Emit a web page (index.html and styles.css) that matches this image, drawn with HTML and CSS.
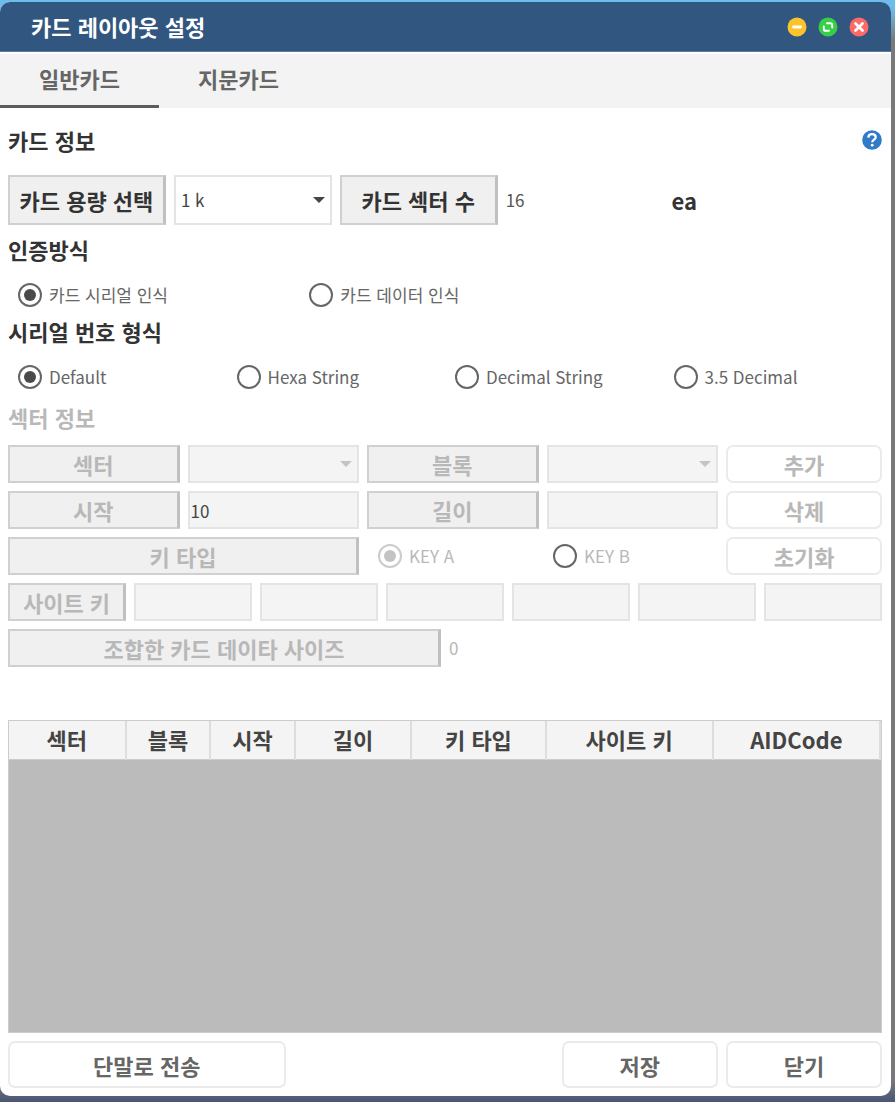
FILE: index.html
```html
<!DOCTYPE html>
<html lang="ko">
<head>
<meta charset="utf-8">
<meta name="viewport" content="width=device-width, initial-scale=1">
<title>카드 레이아웃 설정</title>
<link rel="stylesheet" href="styles.css">
</head>
<body>
<div class="window">
  <header class="titlebar">
    <h1 class="title">카드 레이아웃 설정</h1>
    <div class="controls">
      <button class="control" type="button" aria-label="최소화">
        <svg viewBox="0 0 20 20"><circle cx="10" cy="10" r="9.5" fill="#fcc42c"/><path d="M6.5 10h7" stroke="#fff" stroke-width="2.8" stroke-linecap="round"/></svg>
      </button>
      <button class="control" type="button" aria-label="최대화">
        <svg viewBox="0 0 20 20"><circle cx="10" cy="10" r="9.5" fill="#36d048"/><path d="M9 6.200h3.300a1.900 1.900 0 0 1 1.900 1.900v2.400M11 13.800H7.700a1.900 1.900 0 0 1-1.900-1.900V9.500" fill="none" stroke="#fff" stroke-width="1.900" stroke-linecap="round"/></svg>
      </button>
      <button class="control" type="button" aria-label="창 닫기">
        <svg viewBox="0 0 20 20"><circle cx="10" cy="10" r="9.5" fill="#fb6a67"/><path d="M6.500 6.500l7 7m0-7l-7 7" stroke="#fff" stroke-width="2.700" stroke-linecap="round"/></svg>
      </button>
    </div>
  </header>

  <nav class="tabs" role="tablist">
    <button class="tab tab-active" type="button" role="tab" aria-selected="true">일반카드</button>
    <button class="tab" type="button" role="tab" aria-selected="false">지문카드</button>
  </nav>

  <main class="content">
    <div class="info-heading">
      <h2 class="heading">카드 정보</h2>
      <button class="help" type="button" aria-label="도움말">
        <svg viewBox="0 0 20 20"><circle cx="10" cy="10" r="9.800" fill="#2f7bc8"/><path d="M6.300 7.600C6.400 5.300 7.800 4.200 10 4.200s3.700 1.200 3.700 3.100c0 2.300-3.500 2.500-3.500 4.900" fill="none" stroke="#fff" stroke-width="2.200"/><circle cx="10.200" cy="15.200" r="1.400" fill="#fff"/></svg>
      </button>
    </div>
    <div class="info-row">
      <label class="caption" for="capacity">카드 용량 선택</label>
      <div class="select">
        <select class="field field-open" id="capacity"><option>1 k</option></select>
      </div>
      <label class="caption" for="sectors">카드 섹터 수</label>
      <output class="value" id="sectors">16</output>
      <span class="unit">ea</span>
    </div>

    <h2 class="heading heading-group">인증방식</h2>
    <div class="radios radios-three">
      <label class="radio"><input type="radio" name="auth" checked>카드 시리얼 인식</label>
      <label class="radio"><input type="radio" name="auth">카드 데이터 인식</label>
    </div>

    <h2 class="heading heading-group">시리얼 번호 형식</h2>
    <div class="radios radios-four">
      <label class="radio"><input type="radio" name="format" checked>Default</label>
      <label class="radio"><input type="radio" name="format">Hexa String</label>
      <label class="radio"><input type="radio" name="format">Decimal String</label>
      <label class="radio"><input type="radio" name="format">3.5 Decimal</label>
    </div>

    <h2 class="heading heading-off">섹터 정보</h2>
    <div class="sector">
      <div class="sector-grid">
        <label class="caption caption-off" for="sector">섹터</label>
        <div class="select select-off"><select class="field" id="sector" disabled></select></div>
        <label class="caption caption-off" for="block">블록</label>
        <div class="select select-off"><select class="field" id="block" disabled></select></div>
        <button class="button" type="button" disabled>추가</button>

        <label class="caption caption-off" for="start">시작</label>
        <input class="field" id="start" type="text" value="10" disabled>
        <label class="caption caption-off" for="length">길이</label>
        <input class="field" id="length" type="text" disabled>
        <button class="button" type="button" disabled>삭제</button>

        <span class="caption caption-off span-two" id="keytype">키 타입</span>
        <div class="keys span-two" role="radiogroup" aria-labelledby="keytype">
          <label class="radio radio-off"><input type="radio" name="key" checked disabled>KEY A</label>
          <label class="radio radio-off"><input type="radio" name="key">KEY B</label>
        </div>
        <button class="button" type="button" disabled>초기화</button>
      </div>

      <div class="site-grid">
        <label class="caption caption-off" for="site1">사이트 키</label>
        <input class="field" id="site1" type="text" disabled>
        <input class="field" type="text" aria-label="사이트 키 2" disabled>
        <input class="field" type="text" aria-label="사이트 키 3" disabled>
        <input class="field" type="text" aria-label="사이트 키 4" disabled>
        <input class="field" type="text" aria-label="사이트 키 5" disabled>
        <input class="field" type="text" aria-label="사이트 키 6" disabled>
      </div>

      <div class="size-grid">
        <label class="caption caption-off" for="size">조합한 카드 데이타 사이즈</label>
        <output class="value value-off" id="size">0</output>
      </div>
    </div>

    <div class="list">
      <table class="table">
        <thead>
          <tr>
            <th class="col-index">섹터</th>
            <th class="col-short">블록</th>
            <th class="col-short">시작</th>
            <th class="col-index">길이</th>
            <th class="col-type">키 타입</th>
            <th class="col-wide">사이트 키</th>
            <th class="col-wide">AIDCode</th>
          </tr>
        </thead>
      </table>
    </div>

    <footer class="actions">
      <button class="button" type="button">단말로 전송</button>
      <button class="button button-save" type="button">저장</button>
      <button class="button" type="button">닫기</button>
    </footer>
  </main>
</div>
</body>
</html>
```

FILE: styles.css
```css
* {
  box-sizing: border-box;
}

body {
  margin: 0;
  min-height: 100vh;
  padding: 2px 4px 6px 0;
  display: flex;
  background: linear-gradient(#6cbcec, #6cbcec 8px, #77797b 40px, #77797b 98%, #4a5678);
  color: #333;
  font-family: "Noto Sans CJK KR", "Noto Sans", sans-serif;
  font-size: 17px;
  line-height: 24px;
}

button,
input,
select {
  margin: 0;
  font: inherit;
  color: inherit;
}

svg {
  display: block;
  width: 100%;
  height: 100%;
}

.window {
  flex: 1;
  min-width: 0;
  display: flex;
  flex-direction: column;
  background: #fff;
  border-radius: 10px;
  overflow: hidden;
}

.titlebar {
  display: flex;
  align-items: center;
  justify-content: space-between;
  height: 50px;
  padding: 0 22px 0 31px;
  background: #31567f;
  border-bottom: 1px solid #5d7a9e;
}

.title {
  margin: 0;
  padding-bottom: 2px;
  color: #fff;
  font-size: 22px;
  line-height: 32px;
}

.controls {
  display: flex;
  gap: 11px;
}

.control,
.help {
  width: 20px;
  height: 20px;
  padding: 0;
  border: 0;
  background: none;
}

.tabs {
  display: flex;
  margin-top: 2px;
  background: #f3f3f3;
}

.tab {
  width: 159px;
  height: 54px;
  padding: 0 0 4px;
  border: 0;
  border-bottom: 3px solid transparent;
  background: none;
  color: #666;
  font-size: 22px;
  font-weight: 700;
}

.tab-active {
  border-bottom-color: #5c5c5c;
}

.content {
  flex: 1;
  display: flex;
  flex-direction: column;
  padding: 0 9px 8px 8px;
}

.info-heading {
  display: flex;
  align-items: center;
  justify-content: space-between;
  height: 67px;
  padding-bottom: 4px;
}

.heading {
  margin: 0;
  font-size: 22px;
  line-height: 32px;
}

.heading-group {
  margin-top: 8px;
}

.heading-off {
  margin-top: 12px;
  color: #b8b8b8;
}

.info-row {
  display: grid;
  grid-template-columns: 3fr 3fr 3fr 3fr 4fr;
  grid-auto-rows: 50px;
  gap: 8px;
}

.caption {
  display: flex;
  align-items: center;
  justify-content: center;
  border: 2px solid #d0d0d0;
  border-right: 3px solid #c0c0c0;
  background: #f0f0f0;
  font-size: 22px;
  font-weight: 700;
  white-space: nowrap;
}

.caption-off {
  color: #b8b8b8;
}

.field {
  width: 100%;
  min-width: 0;
  height: 100%;
  padding: 0 1px;
  border: 2px solid #e4e4e4;
  border-radius: 0;
  background: #f4f4f4;
  color: #444;
  opacity: 1;
  appearance: none;
}

.field-open {
  padding: 0 5px;
  background: #fff;
}

.select {
  display: grid;
  align-items: center;
}

.select > .field,
.select::after {
  grid-area: 1 / 1;
}

.select::after {
  content: "";
  justify-self: end;
  margin-right: 7px;
  border: 6px solid transparent;
  border-top-color: #444;
  border-bottom: 0;
  pointer-events: none;
}

.select-off::after {
  border-top-color: #c4c4c4;
}

.value {
  align-self: center;
  color: #555;
}

.value-off {
  color: #b8b8b8;
}

.unit {
  align-self: center;
  font-size: 22px;
  font-weight: 700;
}

.radios {
  display: grid;
  margin-top: 18px;
  padding-left: 10px;
  margin-right: -10px;
}

.radios-three {
  grid-template-columns: repeat(3, 1fr);
}

.radios-four {
  grid-template-columns: repeat(4, 1fr);
}

.radio {
  display: flex;
  align-items: center;
  gap: 7px;
  color: #666;
  white-space: nowrap;
}

.radio input {
  width: 24px;
  height: 24px;
  display: grid;
  place-items: center;
  border: 2px solid #666;
  border-radius: 50%;
  background: #fff;
  appearance: none;
}

.radio input:checked::before {
  content: "";
  width: 12px;
  height: 12px;
  border-radius: 50%;
  background: #4a4a4a;
}

.radio-off {
  color: #b8b8b8;
}

.radio input:disabled {
  border-color: #ccc;
}

.radio input:disabled::before {
  background: #c4c4c4;
}

.sector {
  display: grid;
  gap: 8px;
  margin-top: 12px;
}

.sector-grid,
.site-grid,
.size-grid {
  display: grid;
  grid-auto-rows: 38px;
  gap: 8px;
}

.sector-grid {
  grid-template-columns: repeat(4, 11fr) 10fr;
}

.site-grid {
  grid-template-columns: repeat(7, 1fr);
}

.size-grid {
  grid-template-columns: repeat(2, 1fr);
}

.span-two {
  grid-column: span 2;
}

.keys {
  display: grid;
  grid-template-columns: 1fr 1fr;
  padding-left: 11px;
  margin-right: -10px;
}

.button {
  padding: 0;
  border: 2px solid #ebebeb;
  border-radius: 7px;
  background: #fff;
  color: #666;
  font-size: 22px;
  font-weight: 700;
}

.button:disabled {
  color: #b8b8b8;
}

.list {
  flex: 1;
  min-height: 160px;
  margin-top: 53px;
  border: 1px solid #ccc;
  background: #bbb;
}

.table {
  width: 100%;
  table-layout: fixed;
  border-collapse: collapse;
}

.table th {
  height: 38px;
  padding: 0 0 2px;
  border-right: 2px solid #ddd;
  border-bottom: 1px solid #ccc;
  background: #f4f4f4;
  color: #444;
  font-size: 22px;
}

.col-short {
  width: 9.7%;
}

.col-index {
  width: 13.4%;
}

.col-type {
  width: 15.4%;
}

.col-wide {
  width: 19.2%;
}

.actions {
  display: grid;
  grid-template-columns: 16fr 15fr 9fr 9fr;
  grid-auto-rows: 47px;
  gap: 8px;
  margin-top: 8px;
}

.button-save {
  grid-column: 3;
}
```
